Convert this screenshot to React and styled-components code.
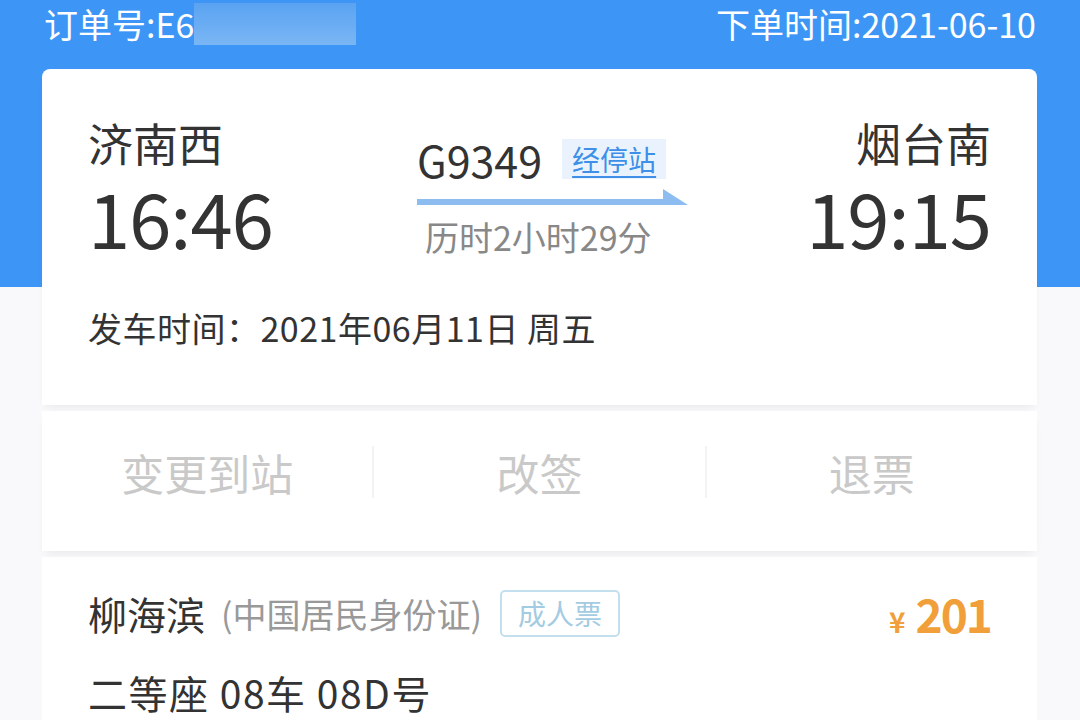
import React from "react";
import styled, { createGlobalStyle } from "styled-components";

const GlobalStyle = createGlobalStyle`
  body {
    margin: 0;
    font-family: "Noto Sans CJK SC", "Noto Sans", sans-serif;
  }
`;

const Page = styled.div`
  min-height: 720px;
  background: linear-gradient(
    to bottom,
    #3d96f5 0,
    #3d96f5 287px,
    #f9f9fb 287px
  );
  overflow: hidden;
`;

const Header = styled.header`
  height: 69px;
  box-sizing: border-box;
  padding: 2px 44px 0 44px;
  display: flex;
  justify-content: space-between;
  align-items: flex-start;
  color: #fff;
  font-size: 34px;
  line-height: 44px;
`;

const OrderNo = styled.div`
  display: flex;
  align-items: center;
`;

const Masked = styled.span`
  display: inline-block;
  width: 162px;
  height: 42px;
  background: linear-gradient(to bottom, #5aa3f2, #7ab6f4);
`;

const Card = styled.main`
  margin: 0 43px 0 42px;
`;

const Section = styled.section`
  background: #fff;
  border-radius: ${(p) => (p.$top ? "8px 8px 0 0" : "0")};
  box-shadow: 0 6px 10px -4px rgba(0, 0, 0, 0.07);
  margin-bottom: ${(p) => p.$gap || 0}px;
`;

const TripSection = styled(Section)`
  height: 336px;
  box-sizing: border-box;
  padding: 46px 46px 0 46px;
`;

const Route = styled.div`
  display: grid;
  grid-template-columns: 329px 272px 1fr;
  color: #333;
`;

const Stop = styled.div`
  display: flex;
  flex-direction: column;
  align-items: ${(p) => (p.$end ? "flex-end" : "flex-start")};
`;

const Station = styled.div`
  font-size: 45px;
  line-height: 56px;
`;

const Time = styled.div`
  font-size: 76px;
  line-height: 90px;
  letter-spacing: -1px;
`;

const Train = styled.div`
  padding-top: 22px;
`;

const TrainRow = styled.div`
  display: flex;
  align-items: center;
  gap: 20px;
`;

const TrainNo = styled.span`
  font-size: 43px;
  line-height: 44px;
  color: #333;
`;

const StopsTag = styled.span`
  background: #eaf3fd;
  color: #3d8fe8;
  font-size: 28px;
  line-height: 40px;
  padding: 0 10px;
  text-decoration: underline;
  text-underline-offset: 5px;
`;

const Arrow = styled.svg`
  display: block;
  margin-top: 8px;
`;

const Duration = styled.div`
  margin-top: 8px;
  font-size: 34px;
  line-height: 44px;
  color: #888;
  padding-left: 8px;
`;

const DateLine = styled.div`
  margin-top: 45px;
  font-size: 34px;
  line-height: 44px;
  letter-spacing: 0.5px;
  color: #333;
`;

const Actions = styled(Section)`
  height: 140px;
  box-sizing: border-box;
  padding-top: 35px;
  display: flex;
  align-items: flex-start;
`;

const Action = styled.div`
  flex: 1;
  text-align: center;
  font-size: 43px;
  line-height: 52px;
  color: #c9c9c9;
  border-left: ${(p) => (p.$divider ? "2px solid #f3f3f3" : "none")};
`;

const Passenger = styled(Section)`
  padding: 31px 46px 10px 46px;
  box-shadow: none;
`;

const NameRow = styled.div`
  display: flex;
  align-items: center;
  height: 50px;
`;

const Name = styled.span`
  font-size: 39px;
  color: #333;
`;

const IdType = styled.span`
  font-size: 34px;
  color: #999;
  margin-left: 16px;
`;

const Badge = styled.span`
  margin-left: 18px;
  border: 2px solid #c3dfee;
  border-radius: 5px;
  color: #a3cbe2;
  font-size: 28px;
  line-height: 43px;
  padding: 0 16px;
`;

const Price = styled.span`
  margin-left: auto;
  color: #f19f3a;
  display: flex;
  align-items: baseline;
  gap: 10px;
`;

const Yen = styled.span`
  font-size: 28px;
  font-weight: 700;
`;

const Amount = styled.span`
  font-size: 46px;
  font-weight: 700;
  letter-spacing: -2px;
`;

const Seat = styled.div`
  margin-top: 32px;
  font-size: 39px;
  line-height: 44px;
  letter-spacing: 1.5px;
  color: #333;
`;

export default function App() {
  return (
    <>
      <GlobalStyle />
      <Page>
        <Header>
          <OrderNo>
            订单号:E6
            <Masked />
          </OrderNo>
          <div>下单时间:2021-06-10</div>
        </Header>
        <Card>
          <TripSection $top $gap={6}>
            <Route>
              <Stop>
                <Station>济南西</Station>
                <Time>16:46</Time>
              </Stop>
              <Train>
                <TrainRow>
                  <TrainNo>G9349</TrainNo>
                  <StopsTag>经停站</StopsTag>
                </TrainRow>
                <Arrow width="272" height="18" viewBox="0 0 272 18">
                  <path d="M0 10 H246 V0 L271 16 H0 Z" fill="#8dbdf0" />
                </Arrow>
                <Duration>历时2小时29分</Duration>
              </Train>
              <Stop $end>
                <Station>烟台南</Station>
                <Time>19:15</Time>
              </Stop>
            </Route>
            <DateLine>发车时间：2021年06月11日 周五</DateLine>
          </TripSection>
          <Actions $gap={6}>
            <Action>变更到站</Action>
            <Action $divider>改签</Action>
            <Action $divider>退票</Action>
          </Actions>
          <Passenger>
            <NameRow>
              <Name>柳海滨</Name>
              <IdType>(中国居民身份证)</IdType>
              <Badge>成人票</Badge>
              <Price>
                <Yen>¥</Yen>
                <Amount>201</Amount>
              </Price>
            </NameRow>
            <Seat>二等座 08车 08D号</Seat>
          </Passenger>
        </Card>
      </Page>
    </>
  );
}
